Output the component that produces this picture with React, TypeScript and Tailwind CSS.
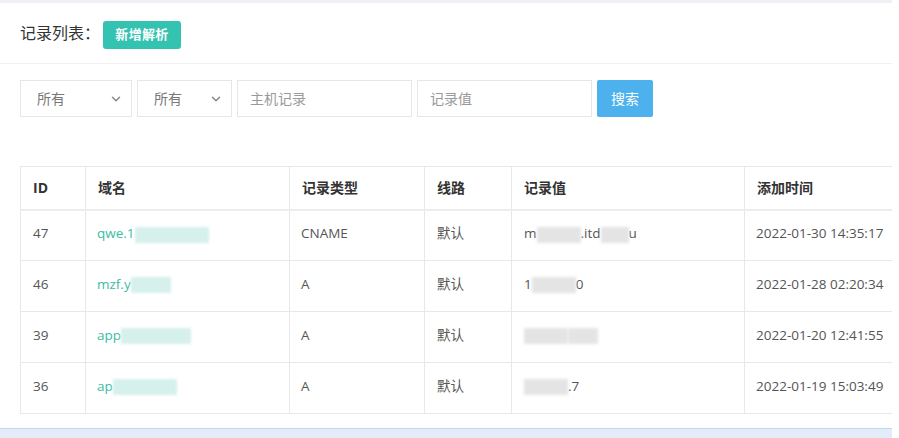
import React from 'react';
import { ChevronDown } from 'lucide-react';

const ROWS = [
  { id: '47', domain: 'qwe.1', dBlur: 'w-[74px]', type: 'CNAME', value: ['m', '.itd', 'u'], time: '2022-01-30 14:35:17' },
  { id: '46', domain: 'mzf.y', dBlur: 'w-[40px]', type: 'A', value: ['1', '', '0'], time: '2022-01-28 02:20:34' },
  { id: '39', domain: 'app', dBlur: 'w-[70px]', type: 'A', value: ['', '', ''], time: '2022-01-20 12:41:55' },
  { id: '36', domain: 'ap', dBlur: 'w-[64px]', type: 'A', value: ['', '.7', ''], time: '2022-01-19 15:03:49' },
];

const Blur = ({ className }: { className: string }) => (
  <span className={`inline-block h-[16px] align-middle blur-[1.5px] ${className}`} />
);

const App: React.FC = () => {
  return (
    <div className="w-[899px] h-[438px] bg-white overflow-hidden text-[#555]" style={{ fontFamily: '"Open Sans", "Noto Sans CJK SC", sans-serif' }}>
      <div className="w-[892px] h-full flex flex-col">
        <div className="h-[3px] bg-[#eef0f6]" />

        <div className="h-[61px] flex items-center px-5 border-b border-[#f0f0f0]">
          <span className="text-[16px] text-[#333]">记录列表：</span>
          <button className="h-[28px] w-[78px] ml-[3px] mt-1 rounded-[3px] bg-[#33c3b0] text-white text-[13px] font-bold tracking-wide">新增解析</button>
        </div>

        <div className="flex items-center gap-[5px] px-5 pt-[16px]">
          <div className="w-[112px] h-[37px] border border-[#e6e6e6] flex items-center justify-between pl-4 pr-2 text-[14px] text-[#777]">
            所有<ChevronDown className="w-3.5 h-3.5 text-[#888]" strokeWidth={2.5} />
          </div>
          <div className="w-[95px] h-[37px] border border-[#e6e6e6] flex items-center justify-between pl-4 pr-2 text-[14px] text-[#777]">
            所有<ChevronDown className="w-3.5 h-3.5 text-[#888]" strokeWidth={2.5} />
          </div>
          <div className="w-[175px] h-[37px] border border-[#e6e6e6] flex items-center px-3 text-[14px] text-[#999]">主机记录</div>
          <div className="w-[175px] h-[37px] border border-[#e6e6e6] flex items-center px-3 text-[14px] text-[#999]">记录值</div>
          <button className="w-[56px] h-[37px] rounded-[2px] bg-[#4cb1ec] text-white text-[14px]">搜索</button>
        </div>

        <div className="pl-5 mt-[49px]">
          <table className="w-[872px] border-collapse text-[13.5px]">
            <thead>
              <tr className="h-[43px] text-left text-[#333] font-bold text-[14px]">
                <th className="w-[65px] pl-3 border border-[#e8e8e8] border-b-2 border-b-[#ececec]">ID</th>
                <th className="w-[204px] pl-3 border border-[#e8e8e8] border-b-2 border-b-[#ececec]">域名</th>
                <th className="w-[135px] pl-3 border border-[#e8e8e8] border-b-2 border-b-[#ececec]">记录类型</th>
                <th className="w-[87px] pl-3 border border-[#e8e8e8] border-b-2 border-b-[#ececec]">线路</th>
                <th className="w-[233px] pl-3 border border-[#e8e8e8] border-b-2 border-b-[#ececec]">记录值</th>
                <th className="pl-3 border border-[#e8e8e8] border-r-0 border-b-2 border-b-[#ececec]">添加时间</th>
              </tr>
            </thead>
            <tbody>
              {ROWS.map((r) => (
                <tr key={r.id} className="h-[51px]">
                  <td className="pl-3 pb-1 border border-[#e8e8e8]">{r.id}</td>
                  <td className="pl-[11px] pb-1 border border-[#e8e8e8] text-[#3cbca6] whitespace-nowrap">
                    {r.domain}
                    <Blur className={`bg-[#d6f0ec] ${r.dBlur}`} />
                  </td>
                  <td className="pl-[11px] pb-1 border border-[#e8e8e8]">{r.type}</td>
                  <td className="pl-3 pb-1 border border-[#e8e8e8]">默认</td>
                  <td className="pl-3 pb-1 border border-[#e8e8e8] whitespace-nowrap">
                    {r.value[0]}
                    <Blur className="bg-[#e4e4e4] w-[44px]" />
                    {r.value[1]}
                    {r.id === '47' && <Blur className="bg-[#e4e4e4] w-[28px]" />}
                    {r.value[2]}
                    {r.id === '39' && <Blur className="bg-[#e4e4e4] w-[30px]" />}
                  </td>
                  <td className="pl-[11px] pb-1 border border-[#e8e8e8] border-r-0 whitespace-nowrap">{r.time}</td>
                </tr>
              ))}
            </tbody>
          </table>
        </div>

        <div className="mt-auto h-[10px] bg-[#e2edf9] border-t border-[#c5d6ea]" />
      </div>
    </div>
  );
};

export default App;
